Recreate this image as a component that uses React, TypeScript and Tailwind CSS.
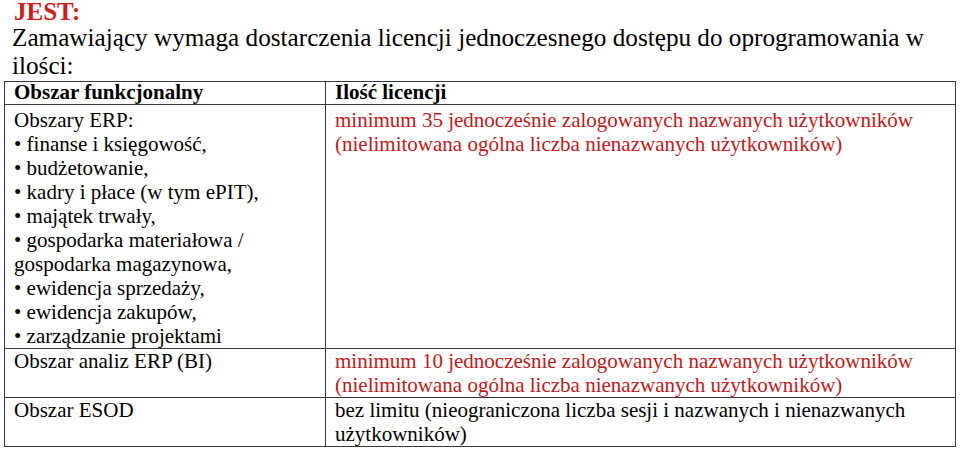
const bullets = [
  "finanse i księgowość,",
  "budżetowanie,",
  "kadry i płace (w tym ePIT),",
  "majątek trwały,",
  "gospodarka materiałowa /",
];
const bullets2 = ["ewidencja sprzedaży,", "ewidencja zakupów,", "zarządzanie projektami"];

const cell = "border border-[#3a3a3a] px-[9px] align-top";

export default function App() {
  return (
    <div className="w-[960px] h-[451px] overflow-hidden bg-white text-black font-['Liberation_Serif','Times_New_Roman',serif]">
      <div className="pl-[14px] text-[25px] leading-[23px] font-bold text-[#d11a1a]">JEST:</div>
      <div className="pl-[12px] text-[25.2px] leading-[28px] mt-[1px]">
        Zamawiający wymaga dostarczenia licencji jednoczesnego dostępu do oprogramowania w
        <br />
        ilości:
      </div>
      <table className="ml-[4px] mt-[1px] w-[952px] border-collapse text-[21px] leading-[24px]">
        <tbody>
          <tr className="h-[23px]">
            <td className={`${cell} w-[321px] py-0 font-bold leading-[20px]`}>Obszar funkcjonalny</td>
            <td className={`${cell} py-0 font-bold leading-[20px]`}>Ilość licencji</td>
          </tr>
          <tr>
            <td className={`${cell} pt-[3px] pb-0`}>
              <div>Obszary ERP:</div>
              {bullets.map((b) => (
                <div key={b}>• {b}</div>
              ))}
              <div>gospodarka magazynowa,</div>
              {bullets2.map((b) => (
                <div key={b}>• {b}</div>
              ))}
            </td>
            <td className={`${cell} pt-[3px] text-[#c41818]`}>
              minimum 35 jednocześnie zalogowanych nazwanych użytkowników
              <br />
              (nielimitowana ogólna liczba nienazwanych użytkowników)
            </td>
          </tr>
          <tr className="h-[48px]">
            <td className={`${cell} pt-0 pb-0`}>Obszar analiz ERP (BI)</td>
            <td className={`${cell} pt-0 pb-0 text-[#c41818]`}>
              minimum 10 jednocześnie zalogowanych nazwanych użytkowników
              <br />
              (nielimitowana ogólna liczba nienazwanych użytkowników)
            </td>
          </tr>
          <tr className="h-[48px]">
            <td className={`${cell} pt-0 pb-0`}>Obszar ESOD</td>
            <td className={`${cell} pt-0 pb-0`}>
              bez limitu (nieograniczona liczba sesji i nazwanych i nienazwanych
              <br />
              użytkowników)
            </td>
          </tr>
        </tbody>
      </table>
    </div>
  );
}
